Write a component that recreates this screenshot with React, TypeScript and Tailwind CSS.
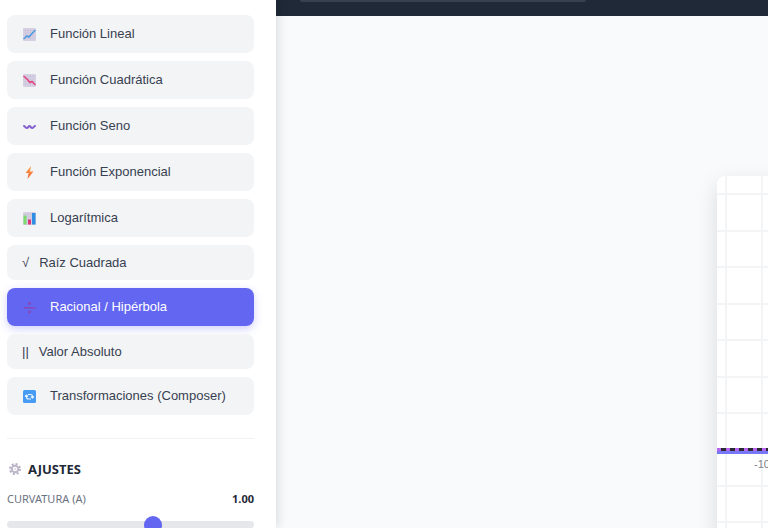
import { useState } from "react";
import type { ReactNode } from "react";

const Icon = ({ children }: { children: ReactNode }) => (
    <svg viewBox="0 0 26 26" className="w-[13px] h-[13px] mx-px shrink-0" aria-hidden="true">
        {children}
    </svg>
);

const ChartPaper = () => (
    <>
        <rect width="26" height="26" rx="2" fill="#d8d2e3" />
        <path
            d="M5 1v24M10 1v24M15 1v24M20 1v24M1 5h24M1 10h24M1 15h24M1 20h24"
            stroke="#c6bdd8"
            strokeWidth="1"
        />
    </>
);

const functions: { id: string; label: string; icon?: ReactNode; symbol?: string }[] = [
    {
        id: "linear",
        label: "Función Lineal",
        icon: (
            <>
                <ChartPaper />
                <path d="M1 22l7-6 4 2 6-7 7-7" fill="none" stroke="#4a9ae0" strokeWidth="3" />
            </>
        ),
    },
    {
        id: "quadratic",
        label: "Función Cuadrática",
        icon: (
            <>
                <ChartPaper />
                <path d="M1 4l7 6 6 7 4-2 7 7" fill="none" stroke="#e6407c" strokeWidth="3" />
            </>
        ),
    },
    {
        id: "sine",
        label: "Función Seno",
        icon: (
            <path
                d="M2 12c2 0 2 4 5.500 4s3-4 5.500-4 2 4 5.500 4 3.500-4 5.500-4"
                fill="none"
                stroke="#8560cf"
                strokeWidth="4"
                strokeLinecap="round"
            />
        ),
    },
    {
        id: "exponential",
        label: "Función Exponencial",
        icon: (
            <>
                <defs>
                    <linearGradient id="bolt" x1="0" y1="0" x2="0" y2="1">
                        <stop offset="0" stopColor="#fba54a" />
                        <stop offset="1" stopColor="#f4623a" />
                    </linearGradient>
                </defs>
                <path d="M16 0L5 14h6l-2 12 12-15h-7z" fill="url(#bolt)" />
            </>
        ),
    },
    {
        id: "log",
        label: "Logarítmica",
        icon: (
            <>
                <ChartPaper />
                <rect x="1" y="7" width="6" height="18" fill="#7bdc6c" />
                <rect x="10" y="15" width="6" height="10" fill="#df3679" />
                <rect x="18" y="2" width="7" height="23" fill="#2f8ee4" />
            </>
        ),
    },
    { id: "sqrt", label: "Raíz Cuadrada", symbol: "√" },
    {
        id: "rational",
        label: "Racional / Hipérbola",
        icon: (
            <g fill="#8747b5">
                <circle cx="13" cy="5" r="2.8" />
                <rect x="1" y="12" width="24" height="3" rx="1" />
                <circle cx="13" cy="22" r="2.8" />
            </g>
        ),
    },
    { id: "abs", label: "Valor Absoluto", symbol: "||" },
    {
        id: "composer",
        label: "Transformaciones (Composer)",
        icon: (
            <>
                <rect width="26" height="26" rx="3" fill="#469bf2" />
                <g fill="none" stroke="#e8f3ff" strokeWidth="2.4">
                    <path d="M10 9h5q4 0 4 4v2M16 13l3 3 3-3" />
                    <path d="M16 18h-5q-4 0-4-4v-2M4 13l3-3 3 3" />
                </g>
            </>
        ),
    },
];

const gridX = [9, 45];
const gridY = [18, 55, 91, 128, 164, 201, 237, 310, 346];

const Graph = () => (
    <div className="ml-[441px] mt-40 w-[760px] h-[546px] shrink-0 overflow-hidden rounded-lg bg-white shadow-[0_8px_22px_rgba(0,0,0,0.13)]">
        <svg className="block w-full h-full" role="img" aria-label="Gráfica de la función">
            <g stroke="#f3f4f6" strokeWidth="2">
                {gridX.map((x) => (
                    <line key={x} x1={x} x2={x} y1="0" y2="546" />
                ))}
                {gridY.map((y) => (
                    <line key={y} x1="0" x2="760" y1={y} y2={y} />
                ))}
            </g>
            <line x1="0" x2="760" y1="276.5" y2="277" stroke="#7577f6" strokeWidth="3" />
            <line x1="0" x2="760" y1="273.5" y2="273.5" stroke="#b565f0" strokeWidth="3" />
            <line
                x1="4"
                x2="760"
                y1="273.5"
                y2="273.5"
                stroke="#2b2933"
                strokeWidth="3"
                strokeDasharray="5 4"
            />
            <text x="37" y="292" fontSize="11" fill="#7c828d">
                -10
            </text>
        </svg>
    </div>
);

const App = () => {
    const [active, setActive] = useState("rational");
    const [curvature, setCurvature] = useState(1);

    return (
        <div className="flex h-screen overflow-hidden bg-[#f9fafc] font-['Liberation_Sans',Arial,sans-serif]">
            <aside className="relative z-10 w-[276px] shrink-0 bg-white pt-[15px] pl-[7px] pr-[22px] shadow-[2px_0_10px_rgba(0,0,0,0.12)]">
                <nav className="flex flex-col gap-2">
                    {functions.map((fn) => (
                        <button
                            key={fn.id}
                            type="button"
                            onClick={() => setActive(fn.id)}
                            className={`flex items-center w-full px-[15px] rounded-lg text-[13px] text-left ${
                                fn.icon ? "h-[38px] gap-[13px]" : "h-[35px] gap-[10px]"
                            } ${
                                active === fn.id
                                    ? "bg-[#6366f1] text-white shadow-[0_3px_8px_rgba(99,102,241,0.3)]"
                                    : "bg-[#f3f4f6] text-[#374151]"
                            }`}
                        >
                            {fn.icon ? <Icon>{fn.icon}</Icon> : <span>{fn.symbol}</span>}
                            <span>{fn.label}</span>
                        </button>
                    ))}
                </nav>

                <section className="mt-[23px] pt-[22px] border-t border-[#f1f2f4] font-['Noto_Sans',sans-serif]">
                    <h3 className="flex items-center gap-[7px] px-[2px] text-[13px] leading-4 font-bold text-[#1f2937]">
                        <svg viewBox="0 0 24 24" className="w-3 h-3" aria-hidden="true">
                            <circle cx="12" cy="12" r="6.5" fill="none" stroke="#bdb7c9" strokeWidth="4" />
                            <circle
                                cx="12"
                                cy="12"
                                r="10"
                                fill="none"
                                stroke="#b7b0c4"
                                strokeWidth="4"
                                strokeDasharray="4 3.85"
                            />
                            <circle cx="12" cy="12" r="2" fill="#d8d3df" />
                        </svg>
                        AJUSTES
                    </h3>
                    <div className="flex items-center justify-between mt-[14px] text-[11px] leading-4">
                        <label htmlFor="curvature" className="text-[#6b7280]">
                            CURVATURA (A)
                        </label>
                        <span className="font-bold text-[#1f2937]">{curvature.toFixed(2)}</span>
                    </div>
                    <input
                        id="curvature"
                        type="range"
                        min={-5}
                        max={5}
                        step={0.1}
                        value={curvature}
                        onChange={(e) => setCurvature(Number(e.target.value))}
                        className="block w-full h-[7px] mt-[14px] appearance-none rounded-full bg-[#e5e7eb] [&::-webkit-slider-thumb]:appearance-none [&::-webkit-slider-thumb]:w-[18px] [&::-webkit-slider-thumb]:h-[18px] [&::-webkit-slider-thumb]:rounded-full [&::-webkit-slider-thumb]:bg-[#6366f1]"
                    />
                </section>
            </aside>

            <main className="flex-1 min-w-0 overflow-hidden">
                <header className="h-4 px-6 bg-[#1f2937]">
                    <div className="w-[286px] h-[2px] rounded-b-md bg-[#374151]" />
                </header>
                <Graph />
            </main>
        </div>
    );
};

export default App;
